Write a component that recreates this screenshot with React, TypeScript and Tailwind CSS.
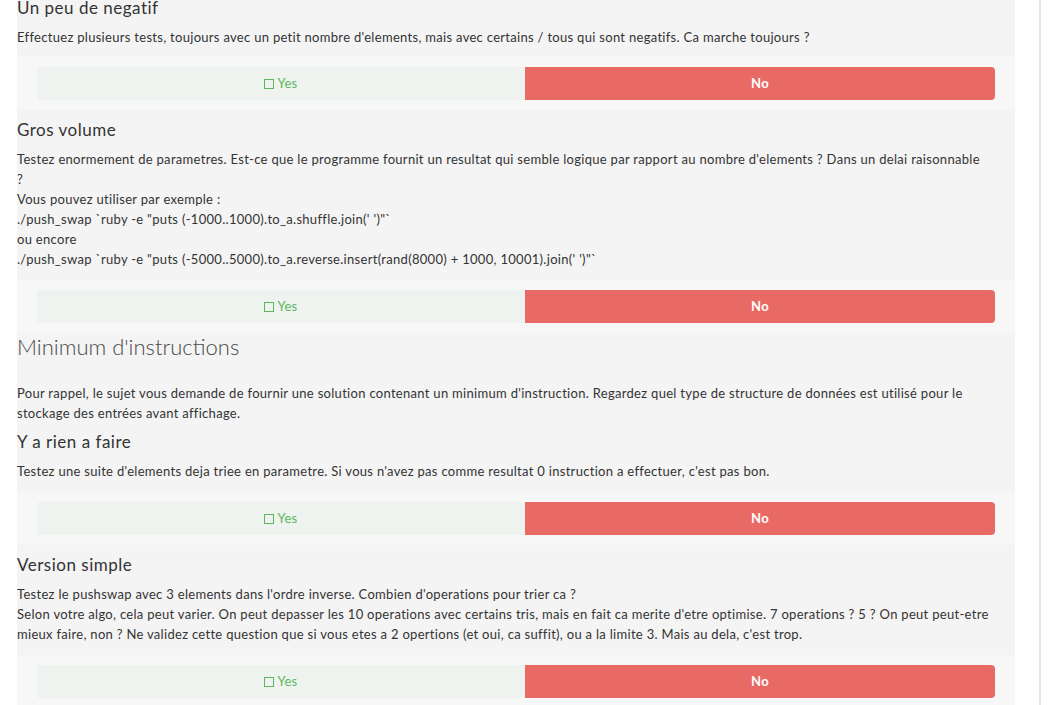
import React from "react";

function Choice() {
  return (
    <div className="flex bg-[#f7f7f7] px-[20px] py-[10px]">
      <div className="flex h-[33px] w-[488px] items-center justify-center rounded-l-[3px] bg-[#eff3ef] text-[13px] tracking-[0.3px] text-[#5cb85c]">
        <span className="mr-[3px] inline-block h-[10px] w-[10px] border-[1.5px] border-[#5cb85c]" />
        Yes
      </div>
      <div className="flex h-[33px] flex-1 items-center justify-center rounded-r-[4px] bg-[#e96a64] text-[13px] font-bold tracking-[0.3px] text-white">
        No
      </div>
    </div>
  );
}

function Title({ children }: { children: React.ReactNode }) {
  return <h4 className="text-[17px] leading-[24px] tracking-[0.5px] text-[#333]">{children}</h4>;
}

function Text({ lines }: { lines: string[] }) {
  return (
    <div className="mt-[7px] text-[13px] leading-[20px] tracking-[0.3px] text-[#333]">
      {lines.map((l, i) => (
        <p key={i}>{l}</p>
      ))}
    </div>
  );
}

export default function App() {
  return (
    <div
      className="relative h-[705px] overflow-hidden bg-white"
      style={{ fontFamily: "Lato, 'Open Sans', sans-serif" }}
    >
      <div className="absolute left-[1039px] top-0 h-full w-[2px] bg-[#e6e6e6]" />
      <div className="-mt-[12px] ml-[17px] w-[998px]">
        {/* Un peu de negatif */}
        <section className="bg-[#f4f4f4] pb-[10px] pt-2">
          <Title>Un peu de negatif</Title>
          <Text
            lines={[
              "Effectuez plusieurs tests, toujours avec un petit nombre d'elements, mais avec certains / tous qui sont negatifs. Ca marche toujours ?",
            ]}
          />
        </section>
        <Choice />

        {/* Gros volume */}
        <section className="bg-[#f4f4f4] pb-[11px] pt-2">
          <Title>Gros volume</Title>
          <Text
            lines={[
              "Testez enormement de parametres. Est-ce que le programme fournit un resultat qui semble logique par rapport au nombre d'elements ? Dans un delai raisonnable",
              "?",
              "Vous pouvez utiliser par exemple :",
              "./push_swap `ruby -e \"puts (-1000..1000).to_a.shuffle.join(' ')\"`",
              "ou encore",
              "./push_swap `ruby -e \"puts (-5000..5000).to_a.reverse.insert(rand(8000) + 1000, 10001).join(' ')\"`",
            ]}
          />
        </section>
        <Choice />

        {/* Minimum d'instructions */}
        <section className="bg-[#f4f4f4] pb-[11px]">
          <h3 className="text-[22px] font-light leading-[28px] text-[#4a4a4a]">
            Minimum d'instructions
          </h3>
          <div className="mt-[22px] text-[13px] leading-[20px] tracking-[0.3px] text-[#333]">
            <p>
              Pour rappel, le sujet vous demande de fournir une solution contenant un minimum
              d'instruction. Regardez quel type de structure de données est utilisé pour le
              stockage des entrées avant affichage.
            </p>
          </div>
          <div className="mt-[7px]">
            <Title>Y a rien a faire</Title>
            <Text
              lines={[
                "Testez une suite d'elements deja triee en parametre. Si vous n'avez pas comme resultat 0 instruction a effectuer, c'est pas bon.",
              ]}
            />
          </div>
        </section>
        <Choice />

        {/* Version simple */}
        <section className="bg-[#f4f4f4] pb-[11px] pt-2">
          <Title>Version simple</Title>
          <div className="mt-[7px] text-[13px] leading-[20px] tracking-[0.3px] text-[#333]">
            <p>Testez le pushswap avec 3 elements dans l'ordre inverse. Combien d'operations pour trier ca ?</p>
            <p>
              Selon votre algo, cela peut varier. On peut depasser les 10 operations avec certains
              tris, mais en fait ca merite d'etre optimise. 7 operations ? 5 ? On peut peut-etre
              mieux faire, non ? Ne validez cette question que si vous etes a 2 opertions (et oui,
              ca suffit), ou a la limite 3. Mais au dela, c'est trop.
            </p>
          </div>
        </section>
        <Choice />
      </div>
    </div>
  );
}
